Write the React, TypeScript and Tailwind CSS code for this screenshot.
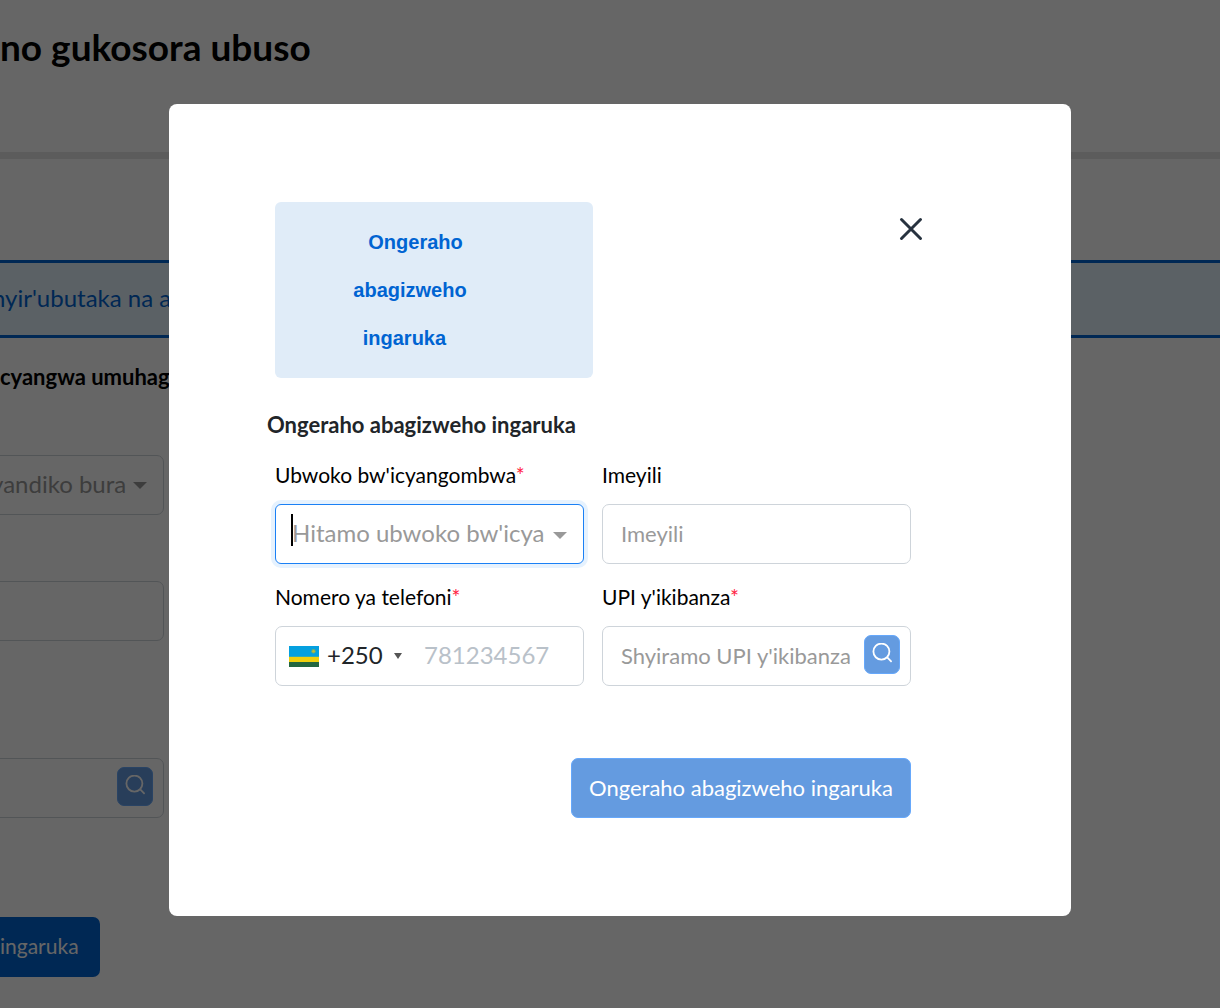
import type { ReactNode } from 'react'

const FIELD =
  'block h-15 w-full rounded-[7px] border border-[#ced4da] bg-white pb-[2px] text-[22px] text-black outline-none placeholder:text-[#999]'

function Caret({ className }: { className: string }) {
  return (
    <svg
      viewBox="0 0 14 7"
      preserveAspectRatio="none"
      className={`pointer-events-none absolute ${className}`}
      aria-hidden="true"
    >
      <path d="M0 0h14L7 7z" fill="currentColor" />
    </svg>
  )
}

function SearchButton() {
  return (
    <button
      type="button"
      aria-label="Shakisha"
      className="absolute top-[9px] right-[11px] flex h-[39px] w-9 justify-center rounded-[7px] border border-[#66a8fb] bg-[#649be0] pt-[7px] text-white"
    >
      <svg viewBox="0 0 20 20" className="size-5" fill="none" stroke="currentColor" strokeWidth="1.8" aria-hidden="true">
        <circle cx="9.4" cy="8.6" r="8" />
        <path d="M15 14.2l4.6 4.6" />
      </svg>
    </button>
  )
}

function Flag() {
  return (
    <svg viewBox="0 0 30 21" className="h-[21px] w-[30px] shrink-0" aria-hidden="true">
      <rect width="30" height="21" fill="#05a0df" />
      <rect y="10.8" width="30" height="5.2" fill="#f0cf0e" />
      <rect y="16" width="30" height="5" fill="#236640" />
      <circle cx="24.5" cy="5.3" r="2.2" fill="#6fae74" />
      <circle cx="24.5" cy="5.3" r="1.2" fill="#c4bd33" />
    </svg>
  )
}

interface FieldProps {
  id: string
  label: string
  required?: boolean
  children: ReactNode
}

function Field({ id, label, required, children }: FieldProps) {
  return (
    <div>
      <label htmlFor={id} className="block h-14 leading-[54px] text-[21px] text-black">
        {label}
        {required && <span className="text-[#ff1f44]">*</span>}
      </label>
      {children}
    </div>
  )
}

/* Form page that sits behind the dialog */
function Page() {
  return (
    <main className="min-h-screen overflow-hidden whitespace-nowrap bg-white pb-8">
      <header className="h-[159px] border-b-[7px] border-[#e6e6e6] pt-[22px]">
        <h1 className="text-[37px] leading-[50px] font-bold text-black">no gukosora ubuso</h1>
      </header>

      <div className="mt-[101px] h-[78px] border-y-[3px] border-[#0064d2] bg-[#e3f2fd]">
        <p className="-ml-2 text-[24px] leading-[70px] text-[#0064d2]">nyir'ubutaka na abandi</p>
      </div>

      <h2 className="mt-5 text-[22px] leading-[38px] font-bold text-black">cyangwa umuhagarariye</h2>

      <form className="-ml-4 w-[180px]">
        <div className="relative mt-[59px]">
          <select
            aria-label="Inyandiko"
            className="block h-15 w-full appearance-none rounded-[7px] border border-[#ced4da] bg-white pr-[37px] pb-[2px] pl-[6px] text-[24px] text-[#999] outline-none"
          >
            <option>yandiko burambuye</option>
          </select>
          <Caret className="top-[27px] right-[17px] h-[7px] w-[14px] text-[#999]" />
        </div>
        <input type="text" aria-label="Amazina" className={`${FIELD} mt-[66px]`} />
        <div className="relative mt-[117px]">
          <input type="text" aria-label="UPI" className={FIELD} />
          <SearchButton />
        </div>
        <button
          type="button"
          className="mt-[99px] h-15 w-[116px] rounded-[7px] bg-[#0064d2] pb-[2px] pl-4 text-left text-[21px] text-white"
        >
          ingaruka
        </button>
      </form>
    </main>
  )
}

function Dialog() {
  return (
    <section
      role="dialog"
      aria-modal="true"
      aria-labelledby="dialog-title"
      className="w-full max-w-[902px] rounded-lg bg-white pt-[98px] pr-40 pb-[98px] pl-[106px]"
    >
      <div className="-mr-[19px] flex items-start justify-between">
        {/* Step name, one word per line */}
        <p className="w-[318px] rounded-md bg-[#e0ecf8] py-4 pr-12 text-center font-['Liberation_Sans',sans-serif] text-[20px] leading-12 font-bold text-[#0064d2]">
          &nbsp;&nbsp;Ongeraho
          <br />
          abagizweho
          <br />
          ingaruka&nbsp;&nbsp;
        </p>
        <button type="button" aria-label="Funga" className="mt-2 text-[#27323f]">
          <svg viewBox="0 0 38 38" className="size-[38px]" fill="none" stroke="currentColor" strokeWidth="3" strokeLinecap="round" aria-hidden="true">
            <path d="M9.5 9.5l19 19M28.5 9.5l-19 19" />
          </svg>
        </button>
      </div>

      <form>
        <h2 id="dialog-title" className="mt-8 -ml-2 text-[22px] leading-[30px] font-bold text-[#212529]">
          Ongeraho abagizweho ingaruka
        </h2>

        <div className="mt-2 grid grid-cols-2 gap-x-[18px] gap-y-[6px]">
          <Field id="id-type" label="Ubwoko bw'icyangombwa" required>
            <div className="relative">
              <select
                id="id-type"
                className="block h-15 w-full appearance-none rounded-md border border-[#1a80f5] bg-white pr-[38px] pb-[2px] pl-4 text-[24px] text-[#999] shadow-[0_0_0_4px_#e6f2fe] outline-none"
              >
                <option>Hitamo ubwoko bw'icyangombwa</option>
              </select>
              <span className="absolute top-[10px] left-4 h-8 w-[2px] bg-black" />
              <Caret className="top-[28px] right-[17px] h-[7px] w-[14px] text-[#999]" />
            </div>
          </Field>

          <Field id="email" label="Imeyili">
            <input id="email" type="email" placeholder="Imeyili" className={`${FIELD} px-[18px]`} />
          </Field>

          <Field id="phone" label="Nomero ya telefoni" required>
            <div className="flex h-15 items-center rounded-[7px] border border-[#ced4da] pl-[13px]">
              <Flag />
              <div className="relative ml-2 shrink-0">
                <select
                  aria-label="Kode y'igihugu"
                  className="block w-[87px] appearance-none bg-transparent pb-[2px] text-[24px] text-[#212529] outline-none"
                >
                  <option>+250</option>
                </select>
                <Caret className="top-1/2 right-3 -mt-[3px] h-[6px] w-2 text-[#555]" />
              </div>
              <input
                id="phone"
                type="tel"
                placeholder="781234567"
                className="min-w-0 flex-1 bg-transparent pb-[2px] pl-[10px] text-[24px] text-[#212529] outline-none placeholder:text-[#b9c1c9]"
              />
            </div>
          </Field>

          <Field id="upi" label="UPI y'ikibanza" required>
            <div className="relative">
              <input
                id="upi"
                type="text"
                placeholder="Shyiramo UPI y'ikibanza"
                className={`${FIELD} pr-12 pl-[18px]`}
              />
              <SearchButton />
            </div>
          </Field>
        </div>

        <div className="mt-[72px] flex justify-end">
          <button
            type="button"
            className="h-15 w-[340px] rounded-[7px] border border-[#66a8fb] bg-[#649be0] pb-[2px] text-[22px] text-white"
          >
            Ongeraho abagizweho ingaruka
          </button>
        </div>
      </form>
    </section>
  )
}

export default function App() {
  return (
    <div className="font-['Lato',sans-serif]">
      <Page />
      <div className="fixed inset-0 flex items-start justify-center overflow-auto bg-black/60 pt-[104px] pl-5">
        <Dialog />
      </div>
    </div>
  )
}
